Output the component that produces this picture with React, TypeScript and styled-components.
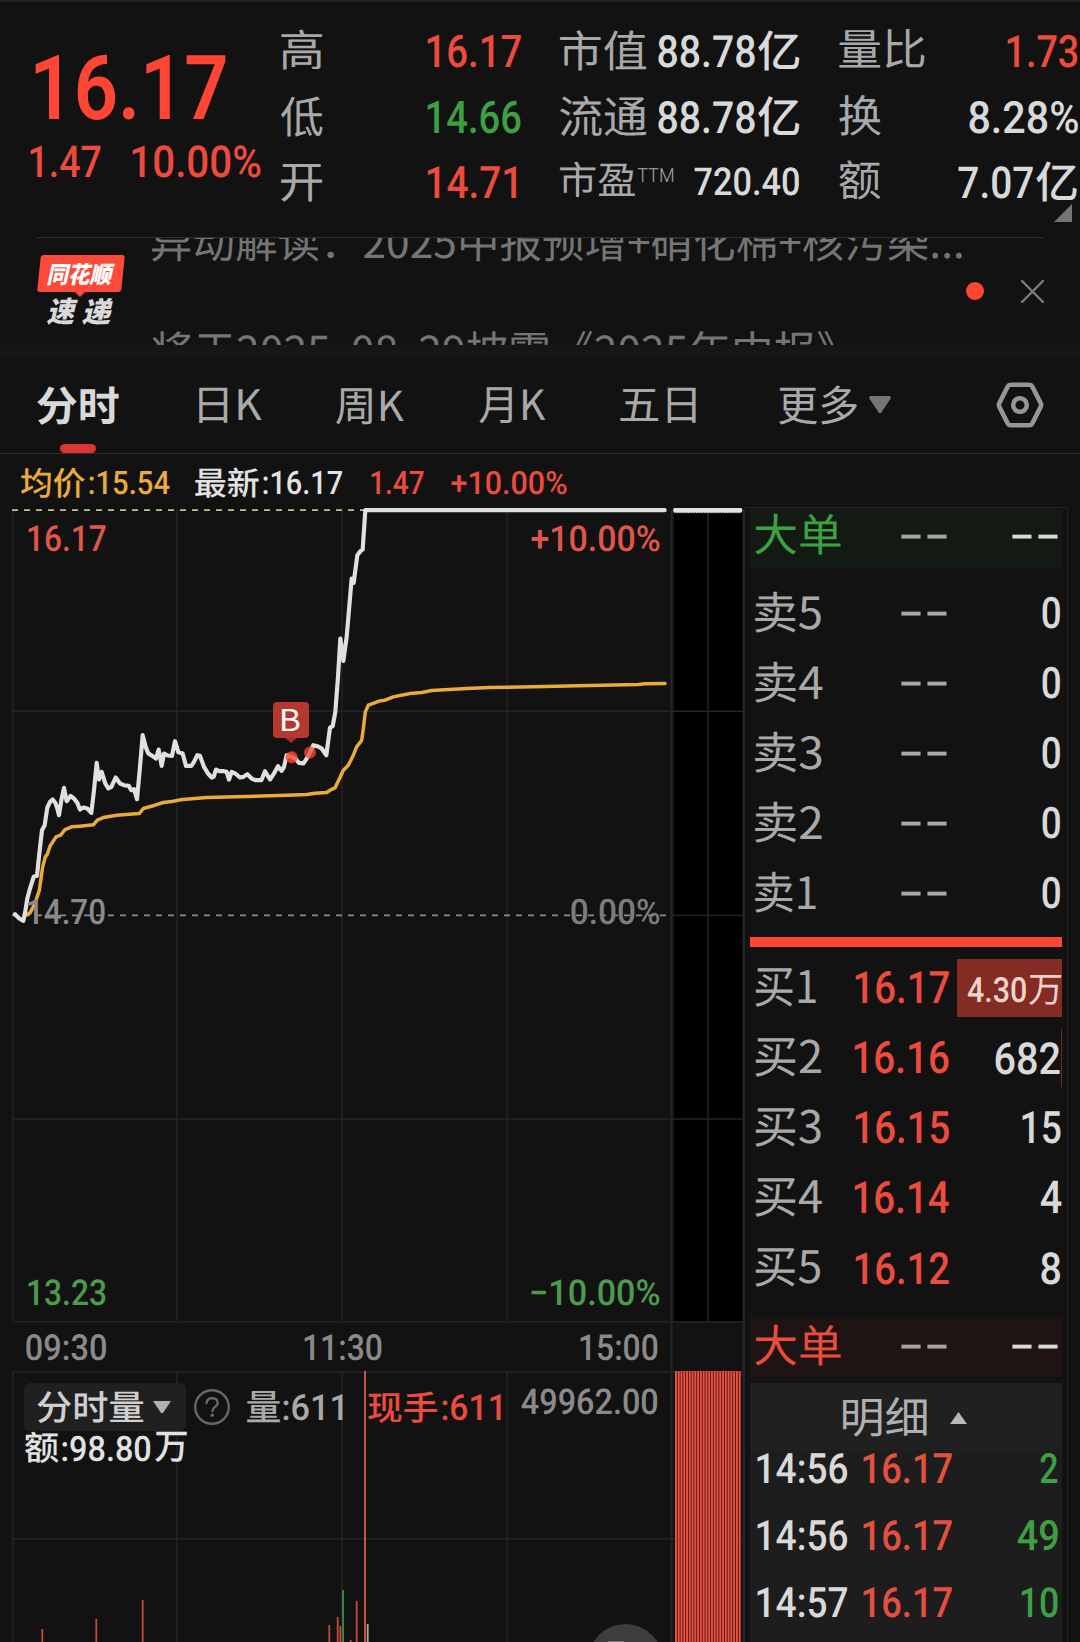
import React, { useMemo } from 'react';
import styled, { createGlobalStyle } from 'styled-components';

const C = {
  bg: '#121212',
  red: '#ec4b3d',
  hot: '#ff4634',
  green: '#3da043',
  label: '#a9a9a9',
  value: '#d9d9d9',
  dim: '#8a8a8a',
  grid: '#262626',
  gold: '#eaab3c',
};

const NUM = 'Roboto, "Noto Sans CJK SC", sans-serif';
const HAN = '"Noto Sans CJK SC", "Noto Sans", sans-serif';

const GlobalStyle = createGlobalStyle`
  html, body { margin: 0; padding: 0; background: ${C.bg}; }
  * { box-sizing: border-box; }
`;

/* ---------- text fitted to its ink box ---------- */

const FitBox = styled.span<{ $w: number; $h: number; $ml?: number; $mr?: number }>`
  display: block;
  flex: none;
  width: ${(p) => p.$w}px;
  height: ${(p) => p.$h}px;
  margin-left: ${(p) => p.$ml || 0}px;
  margin-right: ${(p) => p.$mr || 0}px;
`;

const FitInk = styled.span<{ $han: boolean; $weight: number; $color: string; $italic?: boolean }>`
  display: block;
  width: max-content;
  white-space: pre;
  text-rendering: geometricPrecision;
  font-family: ${(p) => (p.$han ? HAN : NUM)};
  font-weight: ${(p) => p.$weight};
  font-style: ${(p) => (p.$italic ? 'italic' : 'normal')};
  color: ${(p) => p.$color};
  transform-origin: 0 0;
`;

let ctx: CanvasRenderingContext2D | null = null;

function ink(text: string, weight: number, family: string, italic?: boolean) {
  if (!ctx) ctx = document.createElement('canvas').getContext('2d')!;
  ctx.font = `${italic ? 'italic ' : ''}${weight} 100px ${family}`;
  const m = ctx.measureText(text);
  return {
    left: -m.actualBoundingBoxLeft / 100,
    width: (m.actualBoundingBoxRight + m.actualBoundingBoxLeft) / 100,
    asc: m.actualBoundingBoxAscent / 100,
    desc: m.actualBoundingBoxDescent / 100,
    fontAsc: m.fontBoundingBoxAscent / 100,
    fontDesc: m.fontBoundingBoxDescent / 100,
  };
}

interface FitProps {
  children: string;
  w: number;
  h: number;
  color?: string;
  weight?: number;
  han?: boolean;
  italic?: boolean;
  ml?: number;
  mr?: number;
  dy?: number;
}

function Fit({ children, w, h, color = C.value, weight, han = false, italic, ml, mr, dy = 0 }: FitProps) {
  const wt = weight ?? (han ? 400 : 500);
  const style = useMemo(() => {
    const m = ink(children, wt, han ? HAN : NUM, italic);
    const inset = han ? 0 : 0.5;
    const size = h / (m.asc + m.desc);
    const sx = (w - inset * 2) / (m.width * size);
    const base = h / 2 + (Math.round(m.fontAsc * size) - Math.round(m.fontDesc * size)) / 2;
    return {
      fontSize: size,
      lineHeight: `${h}px`,
      transform: `translate(${inset - m.left * size * sx}px, ${m.asc * size - base + dy + 0.7}px) scaleX(${sx})`,
    };
  }, [children, w, h, wt, han, italic, dy]);
  return (
    <FitBox $w={w} $h={h} $ml={ml} $mr={mr}>
      <FitInk $han={han} $weight={wt} $color={color} $italic={italic} style={style}>
        {children}
      </FitInk>
    </FitBox>
  );
}

/* ---------- page ---------- */

const Page = styled.main`
  width: 1080px;
  height: 1642px;
  overflow: hidden;
  background: ${C.bg};
  display: flex;
  flex-direction: column;
`;

const Header = styled.header`
  height: 237px;
  flex: none;
  display: flex;
  border-top: 2px solid #212122;
`;

const Quote = styled.div`
  width: 281px;
  padding: 51.5px 0 0 29px;
`;

const ChangeRow = styled.div`
  display: flex;
  align-items: center;
  margin-top: 26px;
`;

const StatColumn = styled.div<{ $w: number; $gap: number }>`
  width: ${(p) => p.$w}px;
  margin-right: ${(p) => p.$gap}px;
  padding-top: 15px;
  flex: none;
`;

const StatRow = styled.div`
  height: 66px;
  display: flex;
  align-items: center;
  justify-content: space-between;
`;

const Inline = styled.div`
  display: flex;
  align-items: center;
`;

const Expand = styled.svg`
  display: block;
  width: 18px;
  height: 18px;
  margin: -11px 8px 0 auto;
`;

const News = styled.section`
  height: 108px;
  flex: none;
  display: flex;
  margin: 0 36px;
  border-top: 1px solid #303030;
`;

const Brand = styled.div`
  width: 116px;
  padding-top: 17px;
  flex: none;
`;

const BrandTag = styled.div`
  position: relative;
  width: 84px;
  height: 37px;
  margin-left: 3px;
  display: flex;
  align-items: center;
  justify-content: center;
  &::before {
    content: '';
    position: absolute;
    inset: 0;
    border-radius: 3px;
    background: #fb4a3a;
    transform: skewX(-6deg);
  }
  &::after {
    content: '';
    position: absolute;
    left: 35px;
    top: 36px;
    border: 6px solid transparent;
    border-top-color: #fb4a3a;
    border-bottom: 0;
  }
  > span { position: relative; }
`;

const BrandSub = styled.div`
  display: flex;
  padding: 6px 0 0 10.5px;
`;

const Ticker = styled.div`
  width: 814px;
  height: 107px;
  overflow: hidden;
  flex: none;
`;

const TickerLine = styled.div<{ $mt: number }>`
  margin-top: ${(p) => p.$mt}px;
`;

const NewsActions = styled.div`
  display: flex;
  align-items: center;
  gap: 36.5px;
  height: 106px;
`;

const Dot = styled.i`
  width: 18px;
  height: 18px;
  border-radius: 50%;
  background: ${C.hot};
`;

const Band = styled.div`
  height: 12px;
  flex: none;
  background: #161616;
`;

const Tabs = styled.nav`
  height: 97px;
  flex: none;
  display: flex;
  align-items: center;
  border-bottom: 1px solid #303030;
`;

const Tab = styled.div<{ $ml: number; $active?: boolean }>`
  position: relative;
  height: 96px;
  display: flex;
  align-items: center;
  margin-left: ${(p) => p.$ml}px;
  &::after {
    content: '';
    display: ${(p) => (p.$active ? 'block' : 'none')};
    position: absolute;
    left: 23px;
    bottom: 0;
    width: 36px;
    height: 9px;
    border-radius: 5px;
    background: #dd3434;
  }
`;

const Glyph = styled.svg<{ $w: number; $h: number; $ml?: number }>`
  display: block;
  flex: none;
  width: ${(p) => p.$w}px;
  height: ${(p) => p.$h}px;
  margin-left: ${(p) => p.$ml || 0}px;
`;

const Body = styled.div`
  display: flex;
  flex: 1;
`;

const ChartColumn = styled.section`
  width: 744px;
  flex: none;
`;

const InfoRow = styled.div`
  height: 54px;
  display: flex;
  align-items: center;
  padding: 4px 0 0 21px;
`;

const ChartArea = styled.div`
  position: relative;
  height: 1134px;
`;

const Plot = styled.svg`
  position: absolute;
  inset: 0;
  width: 744px;
  height: 1134px;
`;

const PriceLabels = styled.div`
  position: relative;
  width: 660px;
  height: 814px;
  padding: 17.3px 0 16.7px 28px;
  display: flex;
  flex-direction: column;
  justify-content: space-between;
`;

const LabelRow = styled.div`
  display: flex;
  justify-content: space-between;
`;

const Axis = styled.div`
  position: relative;
  height: 50px;
  display: flex;
  align-items: center;
`;

const VolumeRow = styled.div`
  position: relative;
  display: flex;
  align-items: center;
  height: 48px;
  margin: 11px 0 0 24px;
`;

const Picker = styled.div`
  width: 162px;
  height: 48px;
  border-radius: 6px;
  background: #202020;
  display: flex;
  align-items: center;
`;

const AmountRow = styled.div`
  position: relative;
  display: flex;
  align-items: center;
  height: 32px;
  padding-left: 25.3px;
`;

const Marker = styled.div`
  position: absolute;
  left: 273px;
  top: 194px;
  width: 36px;
  height: 36px;
  border-radius: 4px;
  background: #b5382f;
  display: flex;
  align-items: center;
  justify-content: center;
  &::after {
    content: '';
    position: absolute;
    top: 36px;
    left: 12px;
    border: 6px solid transparent;
    border-top: 5px solid #9c3129;
    border-bottom: 0;
  }
`;

const FloatButton = styled.div`
  position: absolute;
  left: 588px;
  top: 1116px;
  width: 75px;
  height: 75px;
  border-radius: 50%;
  background: #3d3d3d;
  clip-path: inset(0 0 57px 0);
  &::after {
    content: '';
    position: absolute;
    left: 20px;
    top: 17px;
    width: 16px;
    height: 4px;
    background: #777;
  }
`;

const Book = styled.aside`
  width: 324px;
  height: 1135px;
  margin: 53px 0 0;
  border: 1px solid #232323;
  border-bottom: 0;
  padding: 0 5px;
  flex: none;
`;

const BookRow = styled.div<{ $h: number; $bg?: string }>`
  height: ${(p) => p.$h}px;
  background: ${(p) => p.$bg || 'transparent'};
  display: grid;
  grid-template-columns: 90px 104px 1fr;
  align-items: center;
  padding-left: 5px;
  > * { justify-self: end; }
  > :first-child { justify-self: start; }
`;

const Spacer = styled.div<{ $h: number }>`
  height: ${(p) => p.$h}px;
`;

const Divider = styled.div`
  height: 10px;
  margin: 10px 0 6px;
  background: ${C.hot};
`;

const Depth = styled.div<{ $full?: boolean; $line?: boolean }>`
  width: 105px;
  height: 58px;
  display: flex;
  align-items: center;
  justify-content: flex-end;
  background: ${(p) => (p.$full ? '#842b23' : 'transparent')};
  border-right: ${(p) => (p.$line ? '1px solid #74291f' : '0')};
`;

const Detail = styled.section`
  margin-top: 6px;
  height: 260px;
  background: #1d1d1d;
`;

const DetailHead = styled.div`
  height: 67px;
  padding: 2px 0 0 92.5px;
  display: flex;
  align-items: center;
  background: #202020;
`;

const TradeRow = styled.div`
  height: 67.2px;
  padding: 0 4px 0 6.5px;
  display: grid;
  grid-template-columns: 106px 90px 1fr;
  > :last-child { justify-self: end; }
`;

/* ---------- data ---------- */

const priceLine =
  '45,1272 58,1285 70,1292 76,1262 82,1225 90,1195 101,1160 111,1157 118,1090 126,1020 134,1005 142,952 150,935 158,928 166,938 172,955 177,975 184,930 192,893 200,933 212,917 222,925 232,938 240,958 250,952 262,955 274,968 282,900 290,818 297,868 305,845 316,880 325,895 334,890 347,862 360,880 372,885 386,887 394,900 402,897 411,927 420,830 428,735 437,770 445,790 457,797 468,805 476,778 485,827 492,790 503,796 516,797 525,753 535,786 548,790 558,827 574,827 582,815 592,795 600,797 612,830 624,850 635,862 641,860 648,838 658,843 672,843 680,845 687,868 695,845 706,850 720,862 730,860 742,852 755,865 766,870 784,870 795,843 810,868 823,848 834,828 845,842 852,830 860,795 875,800 886,805 897,818 910,820 920,805 930,787 940,765 952,768 965,775 979,795 985,750 990,712 998,708 1006,665 1014,560 1021,445 1030,512 1040,440 1055,265 1061,278 1072,195 1082,182 1088,178 1096,60 1994,60';
const avgLine =
  '76,1276 90,1268 105,1240 118,1200 128,1130 136,1100 142,1092 150,1068 168,1040 182,1035 195,1018 215,1010 240,1008 280,1004 292,990 310,982 350,975 418,970 430,955 465,945 490,937 520,933 540,929 620,922 740,919 860,915 920,913 945,909 980,907 990,900 1005,893 1020,862 1030,840 1045,825 1060,795 1070,770 1085,750 1090,715 1096,665 1105,645 1140,632 1155,630 1180,620 1230,610 1265,607 1295,601 1400,595 1470,592 1600,590 1770,586 1915,583 1935,581 1995,580';

const volumes: [number, number, string][] = [
  [42.3, 1629, '#c9483d'],
  [96.3, 1619, '#c9483d'],
  [142.7, 1600, '#c9483d'],
  [329.3, 1625, '#c9483d'],
  [337.7, 1617, '#c9483d'],
  [340.4, 1626, '#c9483d'],
  [343.1, 1590, '#3b8a3e'],
  [350.7, 1640, '#c9483d'],
  [356.7, 1601, '#c9483d'],
  [365, 1371, '#e0594a'],
  [367.7, 1624, '#a8a8a8'],
];

const sells: [string, number][] = [['卖5', 66], ['卖4', 67.7], ['卖3', 66.3], ['卖2', 66.7], ['卖1', 60.5]];
const buys: [string, number, string, number, string, number][] = [
  ['买1', 60.5, '16.17', 94.5, '4.30', 0],
  ['买2', 66, '16.16', 95, '682', 65.5],
  ['买3', 65.5, '16.15', 94.5, '15', 39],
  ['买4', 67, '16.14', 95.5, '4', 22],
  ['买5', 65.3, '16.12', 94.5, '8', 19.5],
];
const trades: [string, string, number][] = [['14:56', '2', 18], ['14:56', '49', 41.5], ['14:57', '10', 37]];

function Chart() {
  return (
    <Plot viewBox="0 508 744 1134">
      <rect x="674" y="509" width="68.5" height="813" fill="#000" />
      <g stroke={C.grid} strokeWidth="1.4">
        {[12.8, 177, 342, 507].map((x) => (
          <path key={x} d={`M${x} 510V1322M${x} 1372V1642`} />
        ))}
        <path d="M671.5 510V1642" strokeWidth="2" />
        <path d="M708 510V1322" />
        <path d="M743.3 510V1642" />
        <path d="M13 711.3H744M13 1119H744M13 1322H744M13 1372H744M13 1538.7H744M672 915.4H744" />
      </g>
      <path d="M12 510.2H366" stroke="#c9bd8f" strokeWidth="1.8" strokeDasharray="6 6" />
      <path d="M12 915.4H667" stroke="#8c8c8c" strokeWidth="1.6" strokeDasharray="6 6" />
      <g transform="translate(0 490.2) scale(0.33333)" fill="none" strokeLinejoin="round" strokeLinecap="round">
        <polyline points={avgLine} stroke={C.gold} strokeWidth="10.5" />
        <polyline points={priceLine} stroke="#e0e0e0" strokeWidth="12.5" />
        <circle cx="875" cy="801" r="18" fill="#ff4634" fillOpacity=".82" />
        <circle cx="930" cy="787" r="18" fill="#ff4634" fillOpacity=".75" />
      </g>
      <path d="M676 510.2H739.5" stroke="#e2e2e2" strokeWidth="5.6" strokeLinecap="round" />
      <path d="M675 507.5H741M675 512.9H741" stroke="#555" strokeWidth="1.2" strokeDasharray="1.4 1.4" />
      {volumes.map(([x, y, c]) => (
        <rect key={x} x={x - 0.9} y={y} width="1.8" height={1642 - y} fill={c} />
      ))}
      <rect x="675" y="1371" width="66" height="271" fill="#4d130e" />
      {Array.from({ length: 24 }, (_, i) => (
        <rect key={i} x={675 + i * 2.77} y="1371" width="1.9" height="271" fill="#e65243" />
      ))}
    </Plot>
  );
}

export default function App() {
  return (
    <>
      <GlobalStyle />
      <Page>
        <Header>
          <Quote>
            <Fit w={191} h={65.5} weight={600} color={C.hot} ml={6} dy={-0.5}>16.17</Fit>
            <ChangeRow>
              <Fit w={71} h={32} color={C.red} ml={0.5} dy={-0.7}>1.47</Fit>
              <Fit w={129} h={32.5} color={C.red} ml={31} dy={-0.7}>10.00%</Fit>
            </ChangeRow>
          </Quote>
          <StatColumn $w={240} $gap={39}>
            <StatRow>
              <Fit han w={41} h={40.7} color={C.label} dy={-0.7}>高</Fit>
              <Fit w={94.5} h={33} color={C.red} dy={0.5}>16.17</Fit>
            </StatRow>
            <StatRow>
              <Fit han w={41.7} h={41.3} color={C.label}>低</Fit>
              <Fit w={94} h={33} color={C.green} dy={0.9}>14.66</Fit>
            </StatRow>
            <StatRow>
              <Fit han w={41} h={38.3} color={C.label} dy={-0.3}>开</Fit>
              <Fit w={89.5} h={32.5} color={C.red} mr={5} dy={-0.5}>14.71</Fit>
            </StatRow>
          </StatColumn>
          <StatColumn $w={239.5} $gap={39}>
            <StatRow>
              <Fit han w={86} h={41.3} color={C.label} dy={-0.4}>市值</Fit>
              <Inline>
                <Fit w={97.2} h={32.8} dy={0.8} mr={3.4}>88.78</Fit>
                <Fit han w={41.4} h={40.7} weight={500}>亿</Fit>
              </Inline>
            </StatRow>
            <StatRow>
              <Fit han w={86.7} h={41.6} color={C.label}>流通</Fit>
              <Inline>
                <Fit w={97.2} h={32.8} dy={0.8} mr={3.4}>88.78</Fit>
                <Fit han w={41.4} h={41} weight={500}>亿</Fit>
              </Inline>
            </StatRow>
            <StatRow>
              <Inline>
                <Fit han w={75} h={36.3} color={C.label} dy={-1.6}>市盈</Fit>
                <Fit w={36.5} h={14} weight={300} color={C.label} ml={2} dy={-7}>TTM</Fit>
              </Inline>
              <Fit w={105.3} h={28.5} dy={-0.3}>720.40</Fit>
            </StatRow>
          </StatColumn>
          <StatColumn $w={241} $gap={0}>
            <StatRow>
              <Fit han w={85.6} h={39.7} color={C.label} dy={-0.4}>量比</Fit>
              <Fit w={71} h={33} color={C.red} dy={0.6} mr={1.5}>1.73</Fit>
            </StatRow>
            <StatRow>
              <Fit han w={41.7} h={41.3} color={C.label}>换</Fit>
              <Fit w={109.5} h={32.8} dy={0.8} mr={1}>8.28%</Fit>
            </StatRow>
            <StatRow>
              <Fit han w={41.5} h={40.5} color={C.label} dy={-0.8}>额</Fit>
              <Inline>
                <Fit w={75.4} h={32.5} mr={2.8} dy={-0.2}>7.07</Fit>
                <Fit han w={40.6} h={40.7} weight={500} mr={2.5} dy={-0.8}>亿</Fit>
              </Inline>
            </StatRow>
            <Expand viewBox="0 0 18 18"><path d="M18 0V18H0Z" fill="#747474" /></Expand>
          </StatColumn>
        </Header>

        <News>
          <Brand>
            <BrandTag>
              <Fit han italic w={68} h={22.5} weight={900} color="#fff">同花顺</Fit>
            </BrandTag>
            <BrandSub>
              <Fit han italic w={31} h={27.5} weight={900}>速</Fit>
              <Fit han italic w={31} h={27.5} weight={900} ml={4}>递</Fit>
            </BrandSub>
          </Brand>
          <Ticker>
            <TickerLine $mt={-16}>
              <Fit han w={810} h={39.5} color="#757575" dy={0.5}>异动解读：2025中报预增+硝化棉+核污染...</Fit>
            </TickerLine>
            <TickerLine $mt={69.5}>
              <Fit han w={684.5} h={40} color="#757575" dy={0.6}>{'将于2025\u200A-\u200A08\u200A-\u200A29披露《2025年中报》'}</Fit>
            </TickerLine>
          </Ticker>
          <NewsActions>
            <Dot />
            <Glyph $w={23} $h={23} viewBox="0 0 23 23">
              <path d="M1 1L22 22M22 1L1 22" stroke="#7c7c7c" strokeWidth="2.4" strokeLinecap="round" />
            </Glyph>
          </NewsActions>
        </News>
        <Band />

        <Tabs>
          <Tab $ml={36.8} $active><Fit han w={82} h={39} weight={700} dy={0.3}>分时</Fit></Tab>
          <Tab $ml={80.2}><Fit han w={63} h={36} color={C.label} dy={0.7}>日K</Fit></Tab>
          <Tab $ml={73.7}><Fit han w={68} h={36.7} color={C.label} dy={1}>周K</Fit></Tab>
          <Tab $ml={75.7}><Fit han w={66.6} h={36.7} color={C.label} dy={1}>月K</Fit></Tab>
          <Tab $ml={74}><Fit han w={75.8} h={36} color={C.label} dy={0.7}>五日</Fit></Tab>
          <Tab $ml={83.6}>
            <Fit han w={78.2} h={39.7} color={C.label} dy={0.4}>更多</Fit>
            <Glyph $w={22} $h={18} $ml={11.4} viewBox="0 0 22 18"><path d="M1 0H21L22 2L12 17H10L0 2Z" fill="#757575" /></Glyph>
          </Tab>
          <Glyph $w={48} $h={46} $ml={105} viewBox="0 0 48 46">
            <path d="M14.5 2.8H33.5Q35.3 2.8 36.2 4.4L44.6 21Q45.6 23 44.6 25L36.2 41.6Q35.3 43.2 33.5 43.2H14.5Q12.7 43.2 11.8 41.6L3.4 25Q2.4 23 3.4 21L11.8 4.4Q12.7 2.8 14.5 2.8Z" fill="none" stroke="#969696" strokeWidth="4.6" />
            <circle cx="24" cy="23" r="6.8" fill="none" stroke="#969696" strokeWidth="4.6" />
          </Glyph>
        </Tabs>

        <Body>
          <ChartColumn>
            <InfoRow>
              <Fit han w={64} h={30.7} weight={500} color={C.gold}>均价</Fit>
              <Fit w={81} h={23.7} color={C.gold} ml={4} dy={0.2}>:15.54</Fit>
              <Fit han w={63.8} h={30.7} weight={500} color="#e2e2e2" ml={25}>最新</Fit>
              <Fit w={79.6} h={23.7} color="#e2e2e2" ml={4.4} dy={0.2}>:16.17</Fit>
              <Fit w={53} h={23.7} color={C.red} ml={28.6} dy={0.2}>1.47</Fit>
              <Fit w={116} h={23.7} color={C.red} ml={26.5} dy={0.2}>+10.00%</Fit>
            </InfoRow>
            <ChartArea>
              <Chart />
              <PriceLabels>
                <LabelRow>
                  <Fit w={78} h={26.4} color="#e0564a">16.17</Fit>
                  <Fit w={129} h={26.4} color="#e0564a" dy={-0.7}>+10.00%</Fit>
                </LabelRow>
                <LabelRow>
                  <Fit w={77} h={26} color={C.dim} dy={-3.8}>14.70</Fit>
                  <Fit w={89} h={26} color="#7c7c7c" dy={-3.8}>0.00%</Fit>
                </LabelRow>
                <LabelRow>
                  <Fit w={78} h={26.4} color="#4a9c4c" dy={-0.7}>13.23</Fit>
                  <Fit w={129} h={26.4} color="#4a9c4c" dy={-0.7}>−10.00%</Fit>
                </LabelRow>
              </PriceLabels>
              <Axis>
                <Fit w={80.3} h={26.6} color={C.dim} ml={25.7} dy={-0.7}>09:30</Fit>
                <Fit w={78} h={26.6} color={C.dim} ml={198} dy={-0.7}>11:30</Fit>
                <Fit w={77.7} h={26.6} color={C.dim} ml={198} dy={-0.7}>15:00</Fit>
              </Axis>
              <VolumeRow>
                <Picker>
                  <Fit han w={106.3} h={33} weight={500} color="#d0d0d0" ml={12.7}>分时量</Fit>
                  <Glyph $w={18} $h={12} $ml={10} viewBox="0 0 18 12"><path d="M0 0H18L10 12H8Z" fill="#b0b0b0" /></Glyph>
                </Picker>
                <Glyph $w={36} $h={36} $ml={8} viewBox="0 0 36 36">
                  <circle cx="18" cy="18" r="16.8" fill="none" stroke="#666" strokeWidth="2.4" />
                  <path d="M12.6 14Q12.8 9.3 18.2 9.3Q23.6 9.3 23.6 13.9Q23.6 16.3 20.9 17.9Q18.4 19.5 18.4 22" fill="none" stroke="#666" strokeWidth="2.4" strokeLinecap="round" />
                  <circle cx="18.3" cy="26.2" r="1.8" fill="#666" />
                </Glyph>
                <Fit han w={33} h={31.7} weight={500} color={C.label} ml={17.3}>量</Fit>
                <Fit w={60} h={26.3} color={C.label} ml={3} mr={1.7}>:611</Fit>
                <Fit han w={69} h={32} weight={500} color={C.red} ml={23.3}>现手</Fit>
                <Fit w={59} h={26.3} color={C.red} ml={4.4} mr={1.6}>:611</Fit>
                <Fit w={136.7} h={26.3} color={C.dim} ml={18.7} dy={-6}>49962.00</Fit>
              </VolumeRow>
              <AmountRow>
                <Fit han w={33.4} h={32} weight={500} color="#e2e2e2">额</Fit>
                <Fit w={88.7} h={26} color="#e2e2e2" ml={3.6} dy={0.7}>:98.80</Fit>
                <Fit han w={31.7} h={30.6} weight={500} color="#e2e2e2" ml={4} dy={0.2}>万</Fit>
              </AmountRow>
              <Marker><Fit han w={17.5} h={22} color="#fff" dy={-1}>B</Fit></Marker>
              <FloatButton />
            </ChartArea>
          </ChartColumn>

          <Book>
            <BookRow $h={60} $bg="#121a13">
              <Fit han w={85.4} h={41.7} color={C.green} dy={-3.3}>大单</Fit>
              <Fit han w={46} h={4.4} color="#a4a8a4" mr={2.2} dy={-2}>--</Fit>
              <Fit han w={46} h={4.4} mr={4} dy={-2}>--</Fit>
            </BookRow>
            <Spacer $h={9} />
            {sells.map(([name, w]) => (
              <BookRow key={name} $h={70}>
                <Fit han w={w} h={41.3} color={C.label} dy={0.6}>{name}</Fit>
                <Fit han w={46} h={4.4} color={C.label} mr={2.2} dy={1}>--</Fit>
                <Fit w={18.3} h={32} mr={2} dy={0.9}>0</Fit>
              </BookRow>
            ))}
            <Divider />
            {buys.map(([name, nw, price, pw, vol, vw], i) => (
              <BookRow key={name} $h={70}>
                <Fit han w={nw} h={39.4} color={C.label} dy={-0.4}>{name}</Fit>
                <Fit w={pw} h={32.6} color={C.red} dy={-0.7}>{price}</Fit>
                <Depth $full={i === 0} $line={i === 1}>
                  {i === 0 ? (
                    <>
                      <Fit w={59.3} h={25.7} color="#eed3cd" dy={2.6}>{vol}</Fit>
                      <Fit han w={32} h={30.3} color="#eed3cd" ml={2.7} mr={1.3} dy={2.8}>万</Fit>
                    </>
                  ) : (
                    <Fit w={vw} h={32.6} mr={i === 1 ? 0.7 : i === 3 ? 0 : 1.5} dy={-0.7}>{vol}</Fit>
                  )}
                </Depth>
              </BookRow>
            ))}
            <Spacer $h={14} />
            <BookRow $h={60} $bg="#1e1413">
              <Fit han w={85.4} h={41.7} color={C.red} dy={-2}>大单</Fit>
              <Fit han w={46} h={4.4} color="#a8a4a4" mr={2.2} dy={-1.2}>--</Fit>
              <Fit han w={46} h={4.4} mr={4} dy={-1.2}>--</Fit>
            </BookRow>
            <Detail>
              <DetailHead>
                <Fit han w={83.4} h={40.4} color="#b0b0b0" dy={0.7}>明细</Fit>
                <Glyph $w={17} $h={12} $ml={24} viewBox="0 0 17 12"><path d="M8.5 0L17 12H0Z" fill="#b8b8b8" /></Glyph>
              </DetailHead>
              <Spacer $h={3} />
              {trades.map(([time, vol, w], i) => (
                <TradeRow key={i}>
                  <Fit w={90.6} h={30.5} dy={0.7}>{time}</Fit>
                  <Fit w={89.3} h={30.5} color="#e4503f" dy={0.7}>16.17</Fit>
                  <Fit w={w} h={30.5} color={C.green} dy={0.7}>{vol}</Fit>
                </TradeRow>
              ))}
            </Detail>
          </Book>
        </Body>
      </Page>
    </>
  );
}
